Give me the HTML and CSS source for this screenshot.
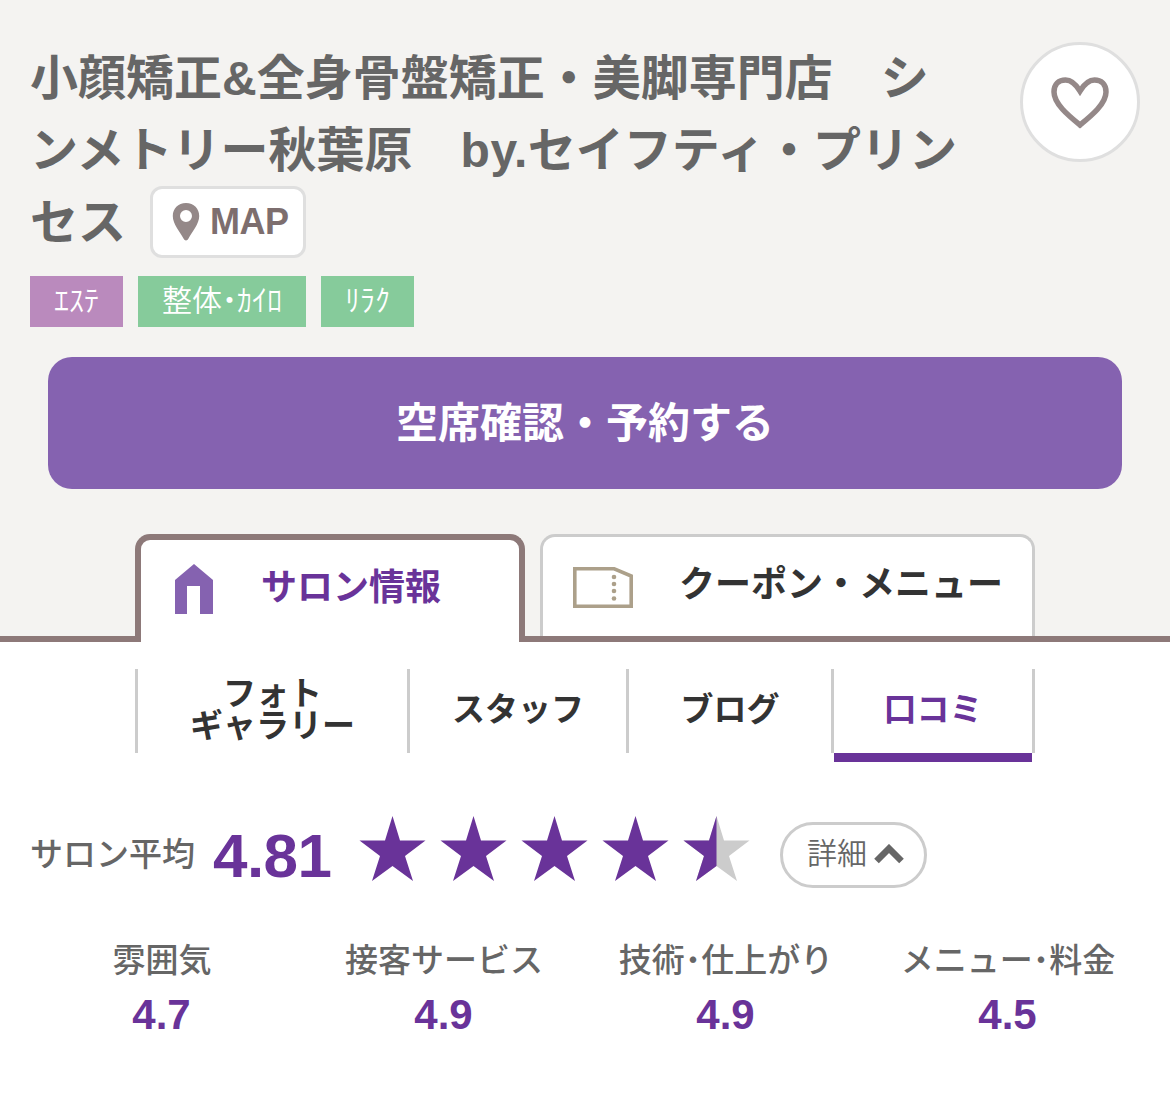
FILE: index.html
```html
<!DOCTYPE html>
<html lang="ja">
<head>
<meta charset="UTF-8">
<meta name="viewport" content="width=device-width, initial-scale=1.0">
<title>シンメトリー秋葉原</title>
<link rel="stylesheet" href="styles.css">
</head>
<body>
    <header class="header">
        <div class="salon">
            <h1 class="salon-name">小顔矯正&amp;全身骨盤矯正・美脚専門店　シ<br>ンメトリー秋葉原　<span class="latin">by.</span>セイフティ・プリン<br>セス<a class="map" href="#"><svg width="28" height="38" viewBox="0 0 28 38"><path fill="#948888" fill-rule="evenodd" d="M14 0C6 0 .8 5.700.8 13c0 8 6.700 15 10.700 22.500 1.200 2.500 3.800 2.500 5 0C20.500 28 27.200 21 27.200 13 27.200 5.700 22 0 14 0zm0 7a6 6 0 1 1 0 12 6 6 0 0 1 0-12z"/></svg><span>MAP</span></a></h1>
            <button class="favorite" aria-label="ブックマーク">
                <svg width="60" height="54" viewBox="0 0 60 54"><path fill="none" stroke="#948888" stroke-width="5.500" d="M30 49C19 40 4 28 4 16 4 8 9 4 15.500 4 22 4 26 8.500 30 15 34 8.500 38 4 44.500 4 51 4 56 8 56 16 56 28 41 40 30 49z"/></svg>
            </button>
        </div>
        <ul class="genres">
            <li class="esthe">ｴｽﾃ</li>
            <li>整体<b>･</b>ｶｲﾛ</li>
            <li>ﾘﾗｸ</li>
        </ul>
        <button class="reserve">空席確認・予約する</button>
        <nav class="tabs">
            <a class="tab tab-salon" href="#">
                <svg width="38" height="50" viewBox="0 0 38 50"><path fill="#8562b0" d="M19 0L38 16v34H25V22H12v28H0V16z"/></svg>
                <span>サロン情報</span>
            </a>
            <a class="tab tab-coupon" href="#">
                <svg width="60" height="41" viewBox="0 0 60 41"><path fill="none" stroke="#aca08a" stroke-width="3.600" d="M1.800 1.800h39.400l17 7.200v30.200H1.800z"/><g fill="#aca08a"><circle cx="41" cy="10" r="2.300"/><circle cx="41" cy="17" r="2.300"/><circle cx="41" cy="24" r="2.300"/><circle cx="41" cy="31.500" r="2.300"/></g></svg>
                <span>クーポン・メニュー</span>
            </a>
        </nav>
    </header>

    <nav class="subnav">
        <a class="photo" href="#">フォト<br>ギャラリー</a>
        <a class="staff" href="#">スタッフ</a>
        <a class="blog" href="#">ブログ</a>
        <a class="review" href="#">口コミ</a>
    </nav>

    <main>
        <div class="average">
            <span class="average-label">サロン平均</span>
            <span class="average-score">4.81</span>
            <svg class="stars" width="391" height="66" viewBox="0 0 391 66">
                <defs>
                    <path id="star" d="M33.500 0L41 24.500H66.500L46 40 54 65 33.500 50 13 65 21 40 .5 24.500H26z"/>
                    <clipPath id="half"><path d="M0 0h33.500v66H0z"/></clipPath>
                </defs>
                <g fill="#693399">
                    <use href="#star"/>
                    <use href="#star" x="81"/>
                    <use href="#star" x="162"/>
                    <use href="#star" x="243"/>
                </g>
                <g transform="translate(324)">
                    <use href="#star" fill="#ccc"/>
                    <g clip-path="url(#half)"><use href="#star" fill="#693399"/></g>
                </g>
            </svg>
            <button class="detail"><span>詳細</span><svg width="30" height="20" viewBox="0 0 30 20"><path fill="none" stroke="#666" stroke-width="6.500" d="M2.500 17L15 4.500 27.500 17"/></svg></button>
        </div>
        <dl class="scores">
            <div><dt>雰囲気</dt><dd>4.7</dd></div>
            <div><dt>接客サービス</dt><dd>4.9</dd></div>
            <div><dt>技術<b>･</b>仕上がり</dt><dd>4.9</dd></div>
            <div><dt>メニュー<b>･</b>料金</dt><dd>4.5</dd></div>
        </dl>
    </main>
</body>
</html>
```
FILE: styles.css
```css
* {
    box-sizing: border-box;
}
body {
    margin: 0;
    font-family: "Liberation Sans", "Noto Sans CJK JP", sans-serif;
    color: #333;
    background-color: #fff;
}
a {
    color: inherit;
    text-decoration: none;
}
button {
    padding: 0;
    font-family: inherit;
    cursor: pointer;
}
svg {
    display: block;
    flex-shrink: 0;
}
.header {
    display: flex;
    flex-direction: column;
    padding-top: 42px;
    background-color: #f4f3f1;
    border-bottom: 6px solid #8d7979;
}
.salon {
    display: flex;
    justify-content: space-between;
    align-items: flex-start;
    height: 216px;
    padding: 0 30px;
}
.salon-name {
    margin: 0;
    padding-top: 1px;
    font-size: 48px;
    font-weight: bold;
    line-height: 72px;
    color: #666;
    white-space: nowrap;
}
.latin {
    letter-spacing: .5px;
}
.map {
    display: inline-flex;
    align-items: center;
    gap: 10px;
    width: 156px;
    height: 72px;
    margin: -1px 0 0 24px;
    padding-left: 19px;
    vertical-align: top;
    font-size: 36px;
    letter-spacing: -.5px;
    color: #7d6e6e;
    background-color: #fff;
    border: 3px solid #dfdfdf;
    border-radius: 12px;
}
.map span {
    margin-top: -1px;
}
.favorite {
    display: flex;
    justify-content: center;
    align-items: center;
    width: 120px;
    height: 120px;
    background-color: #fff;
    border: 3px solid #dfdfdf;
    border-radius: 50%;
}
.favorite svg {
    margin-top: 2px;
}
.genres {
    display: flex;
    gap: 15px;
    margin: 18px 30px 0;
    padding: 0;
    list-style: none;
}
.genres li {
    height: 51px;
    padding: 0 24px;
    font-size: 30px;
    font-weight: 350;
    line-height: 50px;
    color: #fff;
    background-color: #86cb9b;
}
.genres .esthe {
    background-color: #ba8abd;
}
.reserve {
    height: 132px;
    margin: 30px 48px 0;
    padding-bottom: 7px;
    font-size: 42px;
    font-weight: bold;
    color: #fff;
    background-color: #8562b0;
    border: none;
    border-radius: 24px;
}
/* the open tab runs down over the header line */
.tabs {
    display: flex;
    align-items: flex-start;
    gap: 15px;
    margin: 45px 0 -6px 135px;
}
.tab {
    display: flex;
    align-items: center;
    height: 102px;
    font-size: 36px;
    font-weight: bold;
    line-height: 54px;
    background-color: #fff;
    border: 3px solid #ccc;
    border-bottom: none;
    border-radius: 15px 15px 0 0;
}
.tab-salon {
    gap: 48px;
    width: 390px;
    height: 108px;
    padding: 0 0 4px 34px;
    color: #693399;
    border: 6px solid #8d7979;
    border-bottom: none;
}
.tab-salon span {
    margin-top: -2px;
}
.tab-coupon {
    gap: 46px;
    width: 495px;
    padding: 1px 0 0 30px;
}
.tab-coupon span {
    margin-top: -5px;
}
.subnav {
    display: flex;
    width: 900px;
    height: 84px;
    margin: 27px 0 0 135px;
    border-right: 3px solid #ccc;
}
.subnav a {
    display: flex;
    justify-content: center;
    align-items: center;
    height: 84px;
    padding-bottom: 2px;
    border-left: 3px solid #ccc;
    font-size: 33px;
    font-weight: bold;
    line-height: 32px;
    text-align: center;
}
.subnav .photo {
    width: 272px;
}
.subnav .staff {
    width: 219px;
}
.subnav .blog {
    width: 205px;
}
.subnav .review {
    position: relative;
    width: 201px;
    color: #693399;
}
.subnav .review::after {
    content: "";
    position: absolute;
    top: 84px;
    left: 0;
    width: 198px;
    height: 9px;
    background-color: #693399;
}
.average {
    display: flex;
    align-items: center;
    height: 72px;
    margin: 63px 0 0 30px;
}
.average-label {
    font-size: 33px;
    font-weight: 500;
    color: #666;
}
.average-score {
    width: 146px;
    margin: 7px 0 0 18px;
    font-size: 62px;
    font-weight: bold;
    letter-spacing: -.6px;
    color: #693399;
}
.stars {
    margin-top: -7px;
}
.detail {
    display: flex;
    align-items: center;
    gap: 7px;
    width: 147px;
    height: 66px;
    margin: 6px 0 0 30px;
    padding-left: 24px;
    font-size: 30px;
    font-weight: 350;
    color: #666;
    background-color: #fff;
    border: 3px solid #ccc;
    border-radius: 33px;
}
.detail span {
    margin-top: -9px;
}
.detail svg {
    margin-top: -3px;
}
.scores {
    display: grid;
    grid-template-columns: repeat(4, 282px);
    margin: 46px 0 0 21px;
    text-align: center;
}
.scores dt {
    font-size: 33px;
    font-weight: 500;
    line-height: 54px;
    color: #666;
}
.scores dd {
    margin: 0 1px 0 0;
    font-size: 42px;
    font-weight: bold;
    line-height: 54px;
    color: #693399;
}
```
